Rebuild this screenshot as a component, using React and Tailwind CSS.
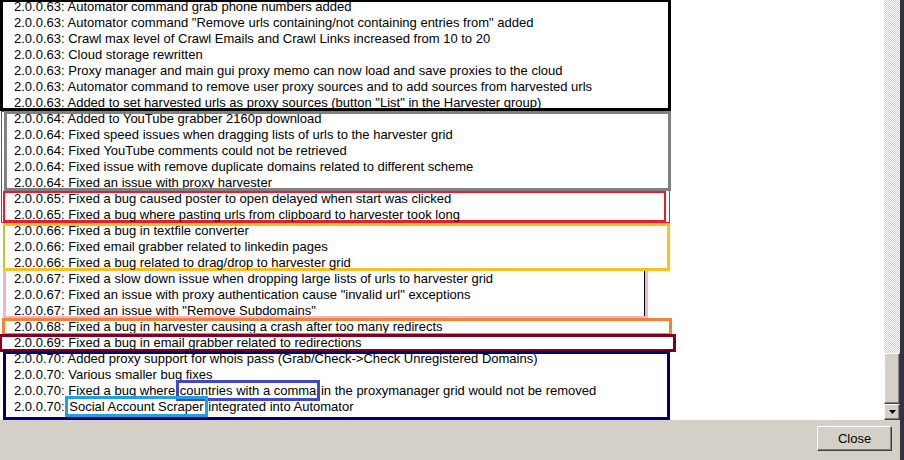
import React from 'react';

const groups = {
  v63: [
    '2.0.0.63: Automator command grab phone numbers added',
    '2.0.0.63: Automator command "Remove urls containing/not containing entries from" added',
    '2.0.0.63: Crawl max level of Crawl Emails and Crawl Links increased from 10 to 20',
    '2.0.0.63: Cloud storage rewritten',
    '2.0.0.63: Proxy manager and main gui proxy memo can now load and save proxies to the cloud',
    '2.0.0.63: Automator command to remove user proxy sources and to add sources from harvested urls',
    '2.0.0.63: Added to set harvested urls as proxy sources (button "List" in the Harvester group)',
  ],
  v64: [
    '2.0.0.64: Added to YouTube grabber 2160p download',
    '2.0.0.64: Fixed speed issues when dragging lists of urls to the harvester grid',
    '2.0.0.64: Fixed YouTube comments could not be retrieved',
    '2.0.0.64: Fixed issue with remove duplicate domains related to different scheme',
    '2.0.0.64: Fixed an issue with proxy harvester',
  ],
  v65: [
    '2.0.0.65: Fixed a bug caused poster to open delayed when start was clicked',
    '2.0.0.65: Fixed a bug where pasting urls from clipboard to harvester took long',
  ],
  v66: [
    '2.0.0.66: Fixed a bug in textfile converter',
    '2.0.0.66: Fixed email grabber related to linkedin pages',
    '2.0.0.66: Fixed a bug related to drag/drop to harvester grid',
  ],
  v67: [
    '2.0.0.67: Fixed a slow down issue when dropping large lists of urls to harvester grid',
    '2.0.0.67: Fixed an issue with proxy authentication cause "invalid url" exceptions',
    '2.0.0.67: Fixed an issue with "Remove Subdomains"',
  ],
  v68: ['2.0.0.68: Fixed a bug in harvester causing a crash after too many redirects'],
  v69: ['2.0.0.69: Fixed a bug in email grabber related to redirections'],
};

const Line = ({ children }) => (
  <div className="h-[16px] leading-[16px] whitespace-nowrap">{children}</div>
);

const Group = ({ items, className }) => (
  <div className={className}>
    {items.map((l, i) => (
      <Line key={i}>{l}</Line>
    ))}
  </div>
);

const Bevel =
  'bg-[#d4d0c8] border border-t-white border-l-white border-r-[#404040] border-b-[#404040] shadow-[inset_-1px_-1px_0_#808080]';

export default function App() {
  return (
    <div
      className="w-[904px] h-[460px] bg-[#d4d0c8] flex flex-col overflow-hidden text-[13px] text-black border-r-[4px] border-r-[#2c3444]"
      style={{ fontFamily: '"Liberation Sans", Arial, sans-serif' }}
    >
      <div className="flex h-[420px] bg-white">
        {/* Memo with highlighted version groups */}
        <div className="flex-1 overflow-hidden">
          <div className="mt-[-1px] flex flex-col items-start">
            <Group
              items={groups.v63}
              className="w-[671px] pl-[14px] outline-[3px] outline-black outline-offset-[-3px]"
            />
            <div className="ml-[1px] w-[669px] shadow-[inset_0_0_0_1px_#e02030] flex flex-col items-start">
              <Group
                items={groups.v64}
                className="ml-[3px] w-[667px] pl-[10px] outline-[3px] outline-[#808080] outline-offset-[-3px]"
              />
              <Group
                items={groups.v65}
                className="ml-[2px] w-[663px] pl-[11px] shadow-[inset_2px_2px_0_#e02030,inset_-2px_-3px_0_#e02030]"
              />
            </div>
            <Group
              items={groups.v66}
              className="ml-[3px] w-[667px] pl-[11px] shadow-[inset_0_-3px_0_#fcc020,inset_-3px_0_0_#fcc020,inset_0_3px_0_#fcc020,inset_2px_0_0_#b8c830]"
            />
            <Group
              items={groups.v67}
              className="ml-[3px] w-[645px] pl-[11px] shadow-[inset_-3px_-3px_0_#f4b4c8,inset_-4px_0_0_#000,inset_3px_0_0_#f4b4c8]"
            />
            <Group
              items={groups.v68}
              className="ml-[3px] w-[668px] pl-[11px] outline-[3px] outline-[#f08434] outline-offset-[-2px]"
            />
            <Group
              items={groups.v69}
              className="w-[675px] pl-[14px] outline-[3px] outline-[#800020] outline-offset-[-2px]"
            />
            <div className="ml-[3px] w-[667px] pl-[11px] pb-[5px] outline-[3px] outline-[#000070] outline-offset-[-3px]">
              <Line>2.0.0.70: Added proxy support for whois pass (Grab/Check-&gt;Check Unregistered Domains)</Line>
              <Line>2.0.0.70: Various smaller bug fixes</Line>
              <Line>
                2.0.0.70: Fixed a bug where{' '}
                <span className="outline-[3px] outline-[#4048c8] px-[1px]">countries with a comma</span> in the
                proxymanager grid would not be removed
              </Line>
              <Line>
                2.0.0.70:{' '}
                <span className="outline-[3px] outline-[#20a0e0] px-[1px]">Social Account Scraper</span> integrated
                into Automator
              </Line>
            </div>
          </div>
        </div>

        {/* Scrollbar */}
        <div className="w-[16px] flex flex-col">
          <div className="flex-1 bg-[repeating-conic-gradient(#d4d0c8_0_25%,#ffffff_0_50%)] bg-[length:2px_2px]" />
          <div className={`h-[51px] ${Bevel}`} />
          <div className={`h-[16px] flex items-center justify-center ${Bevel}`}>
            <svg width="7" height="4" viewBox="0 0 7 4">
              <path d="M0 0h7L3.5 4z" fill="black" />
            </svg>
          </div>
        </div>
      </div>

      {/* Bottom panel */}
      <div className="flex-1 flex justify-end items-start pt-[6px] pr-[8px]">
        <button className={`w-[75px] h-[25px] text-[13px] leading-none ${Bevel}`}>Close</button>
      </div>
    </div>
  );
}
